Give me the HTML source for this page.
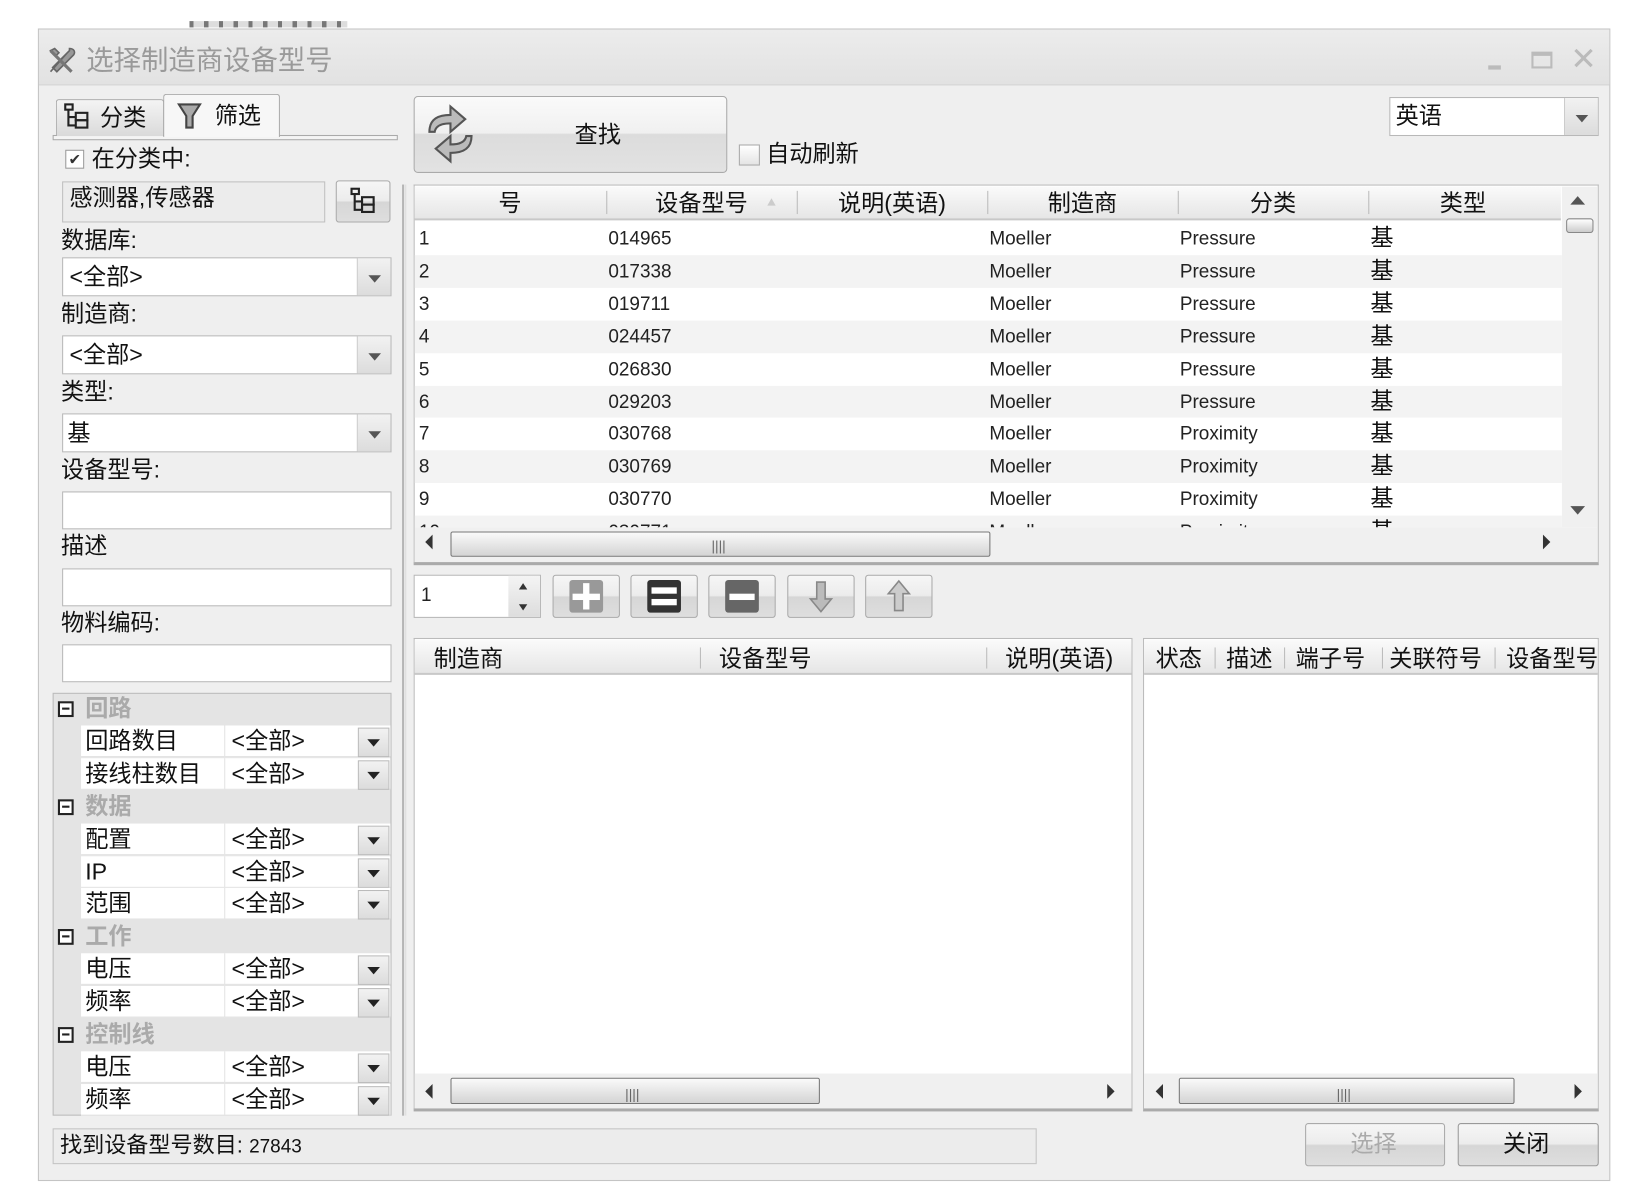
<!DOCTYPE html>
<html><head><meta charset="utf-8">
<style>
html,body{margin:0;padding:0;background:#fff;overflow:hidden;width:1649px;height:1197px}
#s{position:absolute;left:0;top:0;width:1560px;height:1132px;transform:scale(1.0525,1.0545);transform-origin:0 0;font-family:"Liberation Sans","Noto Sans CJK SC",sans-serif;color:#111}
.a{position:absolute;box-sizing:border-box}
.t{position:absolute;white-space:nowrap;font-size:21px;line-height:24px}
.inp{position:absolute;box-sizing:border-box;background:#fff;border:1px solid #b8b8b8}
.dd{position:absolute;box-sizing:border-box;background:linear-gradient(#f2f2f2,#dcdcdc);border-left:1px solid #ccc}
.dd:after{content:"";position:absolute;left:50%;top:50%;margin:-2px 0 0 -6px;border:6px solid transparent;border-top:7px solid #555;border-bottom:0}
.dd2:after{content:"";position:absolute;left:50%;top:50%;margin:-3px 0 0 -6px;border:6px solid transparent;border-top:7px solid #222;border-bottom:0}
.hdr{position:absolute;box-sizing:border-box;background:linear-gradient(#fafafa,#e6e6e6);border-bottom:2px solid #c8c8c8}
.sep{position:absolute;width:1px;background:#bbb}
.num{position:absolute;font-size:18px;line-height:22px;color:#222;white-space:nowrap}
.btn{position:absolute;box-sizing:border-box;border:1px solid #aaa;border-radius:3px;background:linear-gradient(#f6f6f6 0,#ececec 48%,#d6d6d6 52%,#dedede 100%)}
</style></head><body><div id="s">
<div class="a" style="left:180px;top:20px;width:150px;height:6px;background:repeating-linear-gradient(90deg,#777 0 4px,#ddd 4px 14px)"></div>
<div class="a" style="left:36px;top:27px;width:1494px;height:1093px;background:#efefef;border:1px solid #c4c4c4"></div>
<div class="a" style="left:37px;top:28px;width:1492px;height:53px;background:linear-gradient(#ececec,#e2e2e2);border-bottom:1px solid #d2d2d2"></div>
<svg class="a" style="left:44px;top:42px" width="30" height="30" viewBox="0 0 30 30"><path d="M4 26 L20 8 M8 4 l4 4 -3 3 -5 -5z M22 4 c4 0 6 3 4 6 l-16 16 -4 -4 16 -16z" fill="#999" stroke="#666" stroke-width="1.5"/><path d="M4 6 L24 26" stroke="#777" stroke-width="3"/></svg>
<div class="t" style="left:82px;top:42px;font-size:26px;line-height:30px;color:#9a9a9a">选择制造商设备型号</div>
<div class="a" style="left:1414px;top:62px;width:12px;height:4px;background:#bbb"></div>
<div class="a" style="left:1455px;top:49px;width:20px;height:16px;border:2px solid #bbb;border-top-width:4px"></div>
<div class="t" style="left:1492px;top:40px;font-size:30px;line-height:34px;color:#bbb">✕</div>

<div class="a" style="left:50px;top:128px;width:328px;height:5px;border:1px solid #aaa;background:#f4f4f4"></div>
<div class="a" style="left:53px;top:94px;width:103px;height:35px;border:1px solid #aaa;border-bottom:none;border-radius:3px 3px 0 0;background:linear-gradient(#f4f4f4,#dadada)"></div>
<div class="a" style="left:155px;top:89px;width:111px;height:41px;border:1px solid #aaa;border-bottom:none;border-radius:3px 3px 0 0;background:#f7f7f7"></div>
<svg class="a" style="left:60px;top:97px" width="26" height="26" viewBox="0 0 26 26" fill="none" stroke="#222" stroke-width="2"><rect x="2" y="2" width="7" height="5"/><path d="M5 7 v16 M5 14 h7 M5 22 h7"/><rect x="12" y="10" width="11" height="7"/><rect x="12" y="17" width="11" height="7"/></svg>
<div class="t" style="left:95px;top:100px;font-size:22px">分类</div>
<svg class="a" style="left:168px;top:96px" width="24" height="28" viewBox="0 0 24 28"><path d="M2 3 h20 l-7 11 v11 h-6 v-11z" fill="#aaa" stroke="#444" stroke-width="2"/></svg>
<div class="t" style="left:204px;top:98px;font-size:22px">筛选</div>

<div class="a" style="left:62px;top:142px;width:18px;height:18px;border:1px solid #999;background:#fff;font-size:14px;line-height:16px;text-align:center;color:#333">✔</div>
<div class="t" style="left:87px;top:139px;font-size:22px">在分类中:</div>
<div class="a" style="left:59px;top:172px;width:250px;height:39px;border:1px solid #c0c0c0;background:#ececec"></div>
<div class="t" style="left:66px;top:176px;font-size:22px">感测器,传感器</div>
<div class="btn" style="left:319px;top:171px;width:52px;height:40px"></div>
<svg class="a" style="left:332px;top:177px" width="26" height="26" viewBox="0 0 26 26" fill="none" stroke="#222" stroke-width="2"><rect x="2" y="2" width="7" height="5"/><path d="M5 7 v16 M5 14 h7 M5 22 h7"/><rect x="12" y="10" width="11" height="7"/><rect x="12" y="17" width="11" height="7"/></svg>

<div class="t" style="left:58px;top:216px;font-size:22px">数据库:</div>
<div class="inp" style="left:59px;top:244px;width:313px;height:37px"></div><div class="dd" style="left:339px;top:245px;width:32px;height:35px"></div>
<div class="t" style="left:66px;top:251px;font-size:22px">&lt;全部&gt;</div>
<div class="t" style="left:58px;top:286px;font-size:22px">制造商:</div>
<div class="inp" style="left:59px;top:318px;width:313px;height:37px"></div><div class="dd" style="left:339px;top:319px;width:32px;height:35px"></div>
<div class="t" style="left:66px;top:325px;font-size:22px">&lt;全部&gt;</div>
<div class="t" style="left:58px;top:360px;font-size:22px">类型:</div>
<div class="inp" style="left:59px;top:392px;width:313px;height:37px"></div><div class="dd" style="left:339px;top:393px;width:32px;height:35px"></div>
<div class="t" style="left:64px;top:399px;font-size:22px">基</div>
<div class="t" style="left:58px;top:434px;font-size:22px">设备型号:</div>
<div class="inp" style="left:59px;top:466px;width:313px;height:36px"></div>
<div class="t" style="left:58px;top:506px;font-size:22px">描述</div>
<div class="inp" style="left:59px;top:539px;width:313px;height:36px"></div>
<div class="t" style="left:58px;top:579px;font-size:22px">物料编码:</div>
<div class="inp" style="left:59px;top:611px;width:313px;height:36px"></div>

<div class="a" style="left:50px;top:657px;width:322px;height:401px;background:#e4e4e4;border:1px solid #bbb"></div>

<div class="a" style="left:382px;top:175px;width:4px;height:883px;border-left:2px solid #b5b5b5;border-right:1px solid #ddd"></div>

<div class="btn" style="left:393px;top:91px;width:298px;height:73px;border-radius:4px;background:linear-gradient(#fafafa 0,#f0f0f0 48%,#dcdcdc 50%,#e2e2e2 100%)"></div>
<svg class="a" style="left:400px;top:97px" width="56" height="60" viewBox="0 0 56 60" fill="#bbb" stroke="#555" stroke-width="2"><path d="M8 28 c0 -12 8 -16 20 -16 v-8 l14 12 -14 12 v-8 c-8 0 -14 2 -15 8z"/><path d="M48 32 c0 12 -8 16 -20 16 v8 l-14 -12 14 -12 v8 c8 0 14 -2 15 -8z"/></svg>
<div class="t" style="left:546px;top:116px;font-size:22px">查找</div>
<div class="a" style="left:702px;top:137px;width:20px;height:20px;border:1px solid #aaa;background:linear-gradient(#fff,#e4e4e4)"></div>
<div class="t" style="left:728px;top:134px;font-size:22px">自动刷新</div>

<div class="inp" style="left:1320px;top:92px;width:199px;height:37px"></div><div class="dd" style="left:1486px;top:93px;width:32px;height:35px"></div>
<div class="t" style="left:1326px;top:98px;font-size:22px">英语</div>

<div class="a" style="left:393px;top:175px;width:1126px;height:361px;background:#fff;border:1px solid #bbb;border-bottom:3px solid #aaa"></div>
<div class="hdr" style="left:394px;top:177px;width:1089px;height:32px"></div>
<div class="a" style="left:1484px;top:177px;width:34px;height:323px;background:#f0f0f0"></div>
<div class="a" style="left:1492px;top:186px;border:7px solid transparent;border-bottom:8px solid #555;border-top:0"></div>
<div class="a" style="left:1488px;top:207px;width:26px;height:14px;border:1px solid #888;border-radius:3px;background:linear-gradient(#fff,#ccc)"></div>
<div class="a" style="left:1492px;top:480px;border:7px solid transparent;border-top:8px solid #555;border-bottom:0"></div>
<div class="a" style="left:394px;top:500px;width:1124px;height:33px;background:#f0f0f0"></div>
<div class="a" style="left:404px;top:507px;border:7px solid transparent;border-right:7px solid #333;border-left:0"></div>
<div class="a" style="left:428px;top:504px;width:513px;height:24px;border:1px solid #777;border-radius:2px;background:linear-gradient(#fafafa,#d4d4d4)"></div>
<div class="t" style="left:676px;top:506px;font-size:13px;color:#666">||||</div>
<div class="a" style="left:1466px;top:507px;border:7px solid transparent;border-left:7px solid #333;border-right:0"></div>

<div class="inp" style="left:393px;top:545px;width:121px;height:41px"></div>
<div class="a" style="left:483px;top:546px;width:30px;height:39px;background:linear-gradient(#f4f4f4,#ddd)"></div>
<div class="a" style="left:493px;top:553px;border:4px solid transparent;border-bottom:6px solid #333;border-top:0"></div>
<div class="a" style="left:493px;top:573px;border:4px solid transparent;border-top:6px solid #333;border-bottom:0"></div>
<div class="num" style="left:400px;top:553px">1</div>
<div class="btn" style="left:525px;top:545px;width:64px;height:41px"></div>
<div class="a" style="left:541px;top:550px;width:32px;height:31px;background:#999;border-radius:3px"></div>
<div class="a" style="left:554px;top:553px;width:6px;height:25px;background:#fff"></div><div class="a" style="left:544px;top:563px;width:26px;height:6px;background:#fff"></div>
<div class="btn" style="left:599px;top:545px;width:64px;height:41px"></div>
<div class="a" style="left:615px;top:550px;width:32px;height:31px;background:#333;border-radius:3px"></div>
<div class="a" style="left:619px;top:557px;width:24px;height:6px;background:#fff"></div><div class="a" style="left:619px;top:568px;width:24px;height:6px;background:#fff"></div>
<div class="btn" style="left:673px;top:545px;width:64px;height:41px"></div>
<div class="a" style="left:689px;top:550px;width:32px;height:31px;background:#666;border-radius:3px"></div>
<div class="a" style="left:693px;top:563px;width:24px;height:6px;background:#fff"></div>
<div class="btn" style="left:748px;top:545px;width:64px;height:41px"></div>
<svg class="a" style="left:766px;top:550px" width="28" height="32" viewBox="0 0 28 32"><path d="M10 2 h8 v16 h6 l-10 12 -10 -12 h6z" fill="#bbb" stroke="#888" stroke-width="1.5"/></svg>
<div class="btn" style="left:822px;top:545px;width:64px;height:41px"></div>
<svg class="a" style="left:840px;top:549px" width="28" height="32" viewBox="0 0 28 32"><path d="M10 30 h8 v-16 h6 l-10 -12 -10 12 h6z" fill="#ccc" stroke="#888" stroke-width="1.5"/></svg>

<div class="a" style="left:393px;top:605px;width:683px;height:449px;background:#fff;border:1px solid #bbb;border-bottom:3px solid #aaa"></div>
<div class="hdr" style="left:394px;top:607px;width:681px;height:33px"></div>
<div class="sep" style="left:665px;top:614px;height:20px"></div><div class="sep" style="left:937px;top:614px;height:20px"></div>
<div class="t" style="left:412px;top:613px;font-size:22px">制造商</div>
<div class="t" style="left:683px;top:613px;font-size:22px">设备型号</div>
<div class="t" style="left:955px;top:613px;font-size:22px">说明(英语)</div>
<div class="a" style="left:394px;top:1018px;width:681px;height:33px;background:#f0f0f0"></div>
<div class="a" style="left:404px;top:1028px;border:7px solid transparent;border-right:7px solid #333;border-left:0"></div>
<div class="a" style="left:428px;top:1022px;width:351px;height:25px;border:1px solid #777;border-radius:2px;background:linear-gradient(#fafafa,#d4d4d4)"></div>
<div class="t" style="left:594px;top:1026px;font-size:13px;color:#666">||||</div>
<div class="a" style="left:1052px;top:1028px;border:7px solid transparent;border-left:7px solid #333;border-right:0"></div>

<div class="a" style="left:1086px;top:605px;width:433px;height:449px;background:#fff;border:1px solid #bbb;border-bottom:3px solid #aaa"></div>
<div class="hdr" style="left:1087px;top:607px;width:431px;height:33px"></div>
<div class="sep" style="left:1154px;top:614px;height:20px"></div><div class="sep" style="left:1220px;top:614px;height:20px"></div><div class="sep" style="left:1313px;top:614px;height:20px"></div><div class="sep" style="left:1420px;top:614px;height:20px"></div>
<div class="t" style="left:1098px;top:613px;font-size:22px">状态</div>
<div class="t" style="left:1165px;top:613px;font-size:22px">描述</div>
<div class="t" style="left:1231px;top:613px;font-size:22px">端子号</div>
<div class="t" style="left:1320px;top:613px;font-size:22px">关联符号</div>
<div class="t" style="left:1431px;top:613px;font-size:22px;width:86px;overflow:hidden">设备型号</div>
<div class="a" style="left:1087px;top:1018px;width:431px;height:33px;background:#f0f0f0"></div>
<div class="a" style="left:1098px;top:1028px;border:7px solid transparent;border-right:7px solid #333;border-left:0"></div>
<div class="a" style="left:1120px;top:1022px;width:319px;height:25px;border:1px solid #777;border-radius:2px;background:linear-gradient(#fafafa,#d4d4d4)"></div>
<div class="t" style="left:1270px;top:1026px;font-size:13px;color:#666">||||</div>
<div class="a" style="left:1496px;top:1028px;border:7px solid transparent;border-left:7px solid #333;border-right:0"></div>

<div class="a" style="left:50px;top:1070px;width:935px;height:34px;border:1px solid #c4c4c4;background:#ececec"></div>
<div class="t" style="left:57px;top:1075px;font-size:21px">找到设备型号数目: <span style="font-size:18px">27843</span></div>
<div class="btn" style="left:1240px;top:1065px;width:133px;height:41px"></div>
<div class="t" style="left:1283px;top:1073px;font-size:22px;color:#aaa">选择</div>
<div class="btn" style="left:1385px;top:1065px;width:134px;height:41px;border-color:#999"></div>
<div class="t" style="left:1428px;top:1073px;font-size:22px">关闭</div>
</div>
<script>
(function(){
var s=document.getElementById('s');
function el(h){s.insertAdjacentHTML('beforeend',h);}
var cols=[393,576,757,938,1119,1300,1480];
var hd=['号','设备型号','说明(英语)','制造商','分类','类型'];
for(var i=0;i<6;i++){
 if(i>0)el('<div class="sep" style="left:'+cols[i]+'px;top:181px;height:22px"></div>');
 el('<div class="t" style="left:'+cols[i]+'px;width:'+(cols[i+1]-cols[i])+'px;text-align:center;top:181px;font-size:22px">'+hd[i]+'</div>');
}
el('<div class="a" style="left:729px;top:188px;border:4px solid transparent;border-bottom:7px solid #ccc;border-top:0"></div>');
var ids=['014965','017338','019711','024457','026830','029203','030768','030769','030770','030771'];
for(var r=0;r<10;r++){
 var y=211+r*30.9;
 var h=r==9?(500-y):30.9;
 if(r%2==1)el('<div class="a" style="left:394px;top:'+y+'px;width:1090px;height:'+h+'px;background:#f3f3f3"></div>');
 el('<div class="a" style="left:394px;top:'+y+'px;width:1090px;height:'+h+'px;overflow:hidden"><div class="num" style="left:4px;top:4px">'+(r+1)+'</div><div class="num" style="left:184px;top:4px">'+ids[r]+'</div><div class="num" style="left:546px;top:4px">Moeller</div><div class="num" style="left:727px;top:4px">'+(r<6?'Pressure':'Proximity')+'</div><div class="t" style="left:908px;top:3px;font-size:22px">基</div></div>');
}
var rows=[['g','回路'],['r','回路数目'],['r','接线柱数目'],['g','数据'],['r','配置'],['r','IP'],['r','范围'],['g','工作'],['r','电压'],['r','频率'],['g','控制线'],['r','电压'],['r','频率']];
for(var k=0;k<rows.length;k++){
 var y=657+k*30.9;
 if(rows[k][0]=='g'){
  el('<div class="a" style="left:55px;top:'+(y+8)+'px;width:15px;height:15px;border:2px solid #222;background:#fff"></div><div class="a" style="left:59px;top:'+(y+14)+'px;width:7px;height:2px;background:#222"></div>');
  el('<div class="t" style="left:81px;top:'+(y+3)+'px;font-size:22px;color:#aaa;font-weight:bold">'+rows[k][1]+'</div>');
 } else {
  el('<div class="a" style="left:77px;top:'+y+'px;width:294px;height:30px;background:#fff;border-bottom:1px solid #e2e2e2"></div>');
  el('<div class="a" style="left:213px;top:'+y+'px;width:1px;height:30px;background:#e4e4e4"></div>');
  el('<div class="t" style="left:81px;top:'+(y+3)+'px;font-size:22px">'+rows[k][1]+'</div>');
  el('<div class="t" style="left:220px;top:'+(y+3)+'px;font-size:22px">&lt;全部&gt;</div>');
  el('<div class="dd dd2" style="left:340px;top:'+(y+2)+'px;width:30px;height:28px;border:1px solid #bbb"></div>');
 }
}
})();
</script>
</body></html>
